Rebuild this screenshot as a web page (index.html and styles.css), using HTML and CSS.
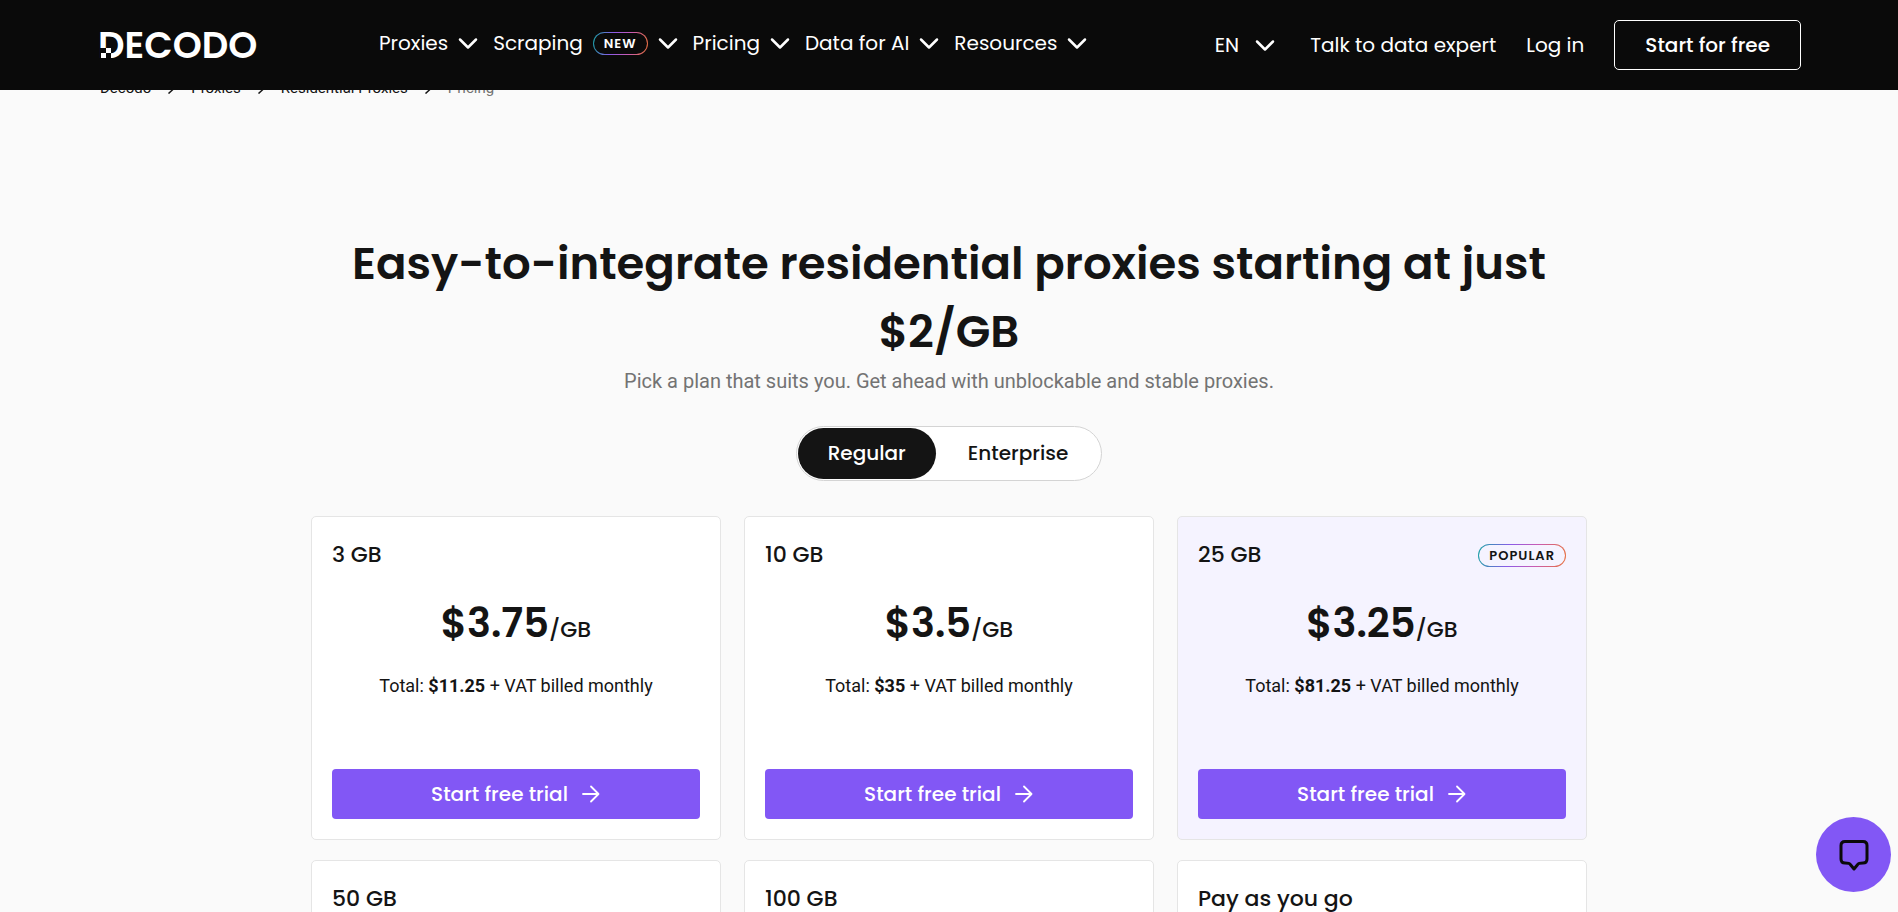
FILE: index.html
```html
<!DOCTYPE html>
<html lang="en">
<head>
<meta charset="utf-8">
<meta name="viewport" content="width=device-width, initial-scale=1">
<title>Decodo</title>
<link rel="stylesheet" href="styles.css">
</head>
<body>
<svg class="symbols" aria-hidden="true">
  <symbol id="chevron" viewBox="0 0 24 24"><path d="M4 8.500l8 8 8-8" fill="none" stroke="currentColor" stroke-width="2.500" stroke-linecap="round" stroke-linejoin="round"/></symbol>
  <symbol id="arrow" viewBox="0 0 20 20"><path d="M2 10h15M10 2.500l7.500 7.500-7.500 7.500" fill="none" stroke="currentColor" stroke-width="1.800" stroke-linecap="round" stroke-linejoin="round"/></symbol>
  <symbol id="next" viewBox="0 0 12 12"><path d="M3.500 0.500l6 5.500-6 5.500" fill="none" stroke="currentColor" stroke-width="1.500"/></symbol>
</svg>

<header class="header">
  <a class="logo" href="#" aria-label="Decodo">
    <svg class="logo-art" viewBox="0 0 160 30">
      <text class="logo-text" x="-2" y="28">DECODO</text>
      <path fill="#0a0a0a" d="M0 18h11v11H0z"/>
      <path fill="#fff" d="M6 18h5v5H6zM1 23h5v5H1z"/>
    </svg>
  </a>
  <nav class="nav">
    <button class="nav-item" type="button">Proxies <svg class="chevron"><use href="#chevron"/></svg></button>
    <button class="nav-item" type="button">Scraping <span class="badge badge-dark">NEW</span> <svg class="chevron"><use href="#chevron"/></svg></button>
    <button class="nav-item" type="button">Pricing <svg class="chevron"><use href="#chevron"/></svg></button>
    <button class="nav-item" type="button">Data for AI <svg class="chevron"><use href="#chevron"/></svg></button>
    <button class="nav-item" type="button">Resources <svg class="chevron"><use href="#chevron"/></svg></button>
  </nav>
  <div class="account">
    <button class="language" type="button">EN <svg class="chevron"><use href="#chevron"/></svg></button>
    <a class="account-link" href="#">Talk to data expert</a>
    <a class="account-link" href="#">Log in</a>
    <a class="start" href="#">Start for free</a>
  </div>
</header>

<main class="page">
  <nav class="crumbs" aria-label="Breadcrumb">
    <a href="#">Decodo</a><svg class="next"><use href="#next"/></svg>
    <a href="#">Proxies</a><svg class="next"><use href="#next"/></svg>
    <a href="#">Residential Proxies</a><svg class="next"><use href="#next"/></svg>
    <span class="crumb-current">Pricing</span>
  </nav>
  <section class="plans">
    <h1 class="title">Easy-to-integrate residential proxies starting at just $2/GB</h1>
    <p class="subtitle">Pick a plan that suits you. Get ahead with unblockable and stable proxies.</p>
    <div class="toggle">
      <button class="toggle-option toggle-active" type="button" aria-pressed="true">Regular</button>
      <button class="toggle-option" type="button" aria-pressed="false">Enterprise</button>
    </div>
    <div class="cards">
      <article class="card">
        <div class="card-head"><h2 class="card-title">3 GB</h2></div>
        <p class="price"><strong class="amount">$3.75</strong>/GB</p>
        <p class="total">Total: <b>$11.25</b> + VAT billed monthly</p>
        <a class="trial" href="#">Start free trial <svg class="arrow"><use href="#arrow"/></svg></a>
      </article>
      <article class="card">
        <div class="card-head"><h2 class="card-title">10 GB</h2></div>
        <p class="price"><strong class="amount">$3.5</strong>/GB</p>
        <p class="total">Total: <b>$35</b> + VAT billed monthly</p>
        <a class="trial" href="#">Start free trial <svg class="arrow"><use href="#arrow"/></svg></a>
      </article>
      <article class="card card-popular">
        <div class="card-head"><h2 class="card-title">25 GB</h2><span class="badge badge-light">POPULAR</span></div>
        <p class="price"><strong class="amount">$3.25</strong>/GB</p>
        <p class="total">Total: <b>$81.25</b> + VAT billed monthly</p>
        <a class="trial" href="#">Start free trial <svg class="arrow"><use href="#arrow"/></svg></a>
      </article>
      <article class="card"><div class="card-head"><h2 class="card-title">50 GB</h2></div></article>
      <article class="card"><div class="card-head"><h2 class="card-title">100 GB</h2></div></article>
      <article class="card"><div class="card-head"><h2 class="card-title">Pay as you go</h2></div></article>
    </div>
  </section>
</main>

<button class="chat" type="button" aria-label="Open chat">
  <svg class="chat-icon" viewBox="0 0 32 32"><path d="M7 2.500h18q4 0 4 4v13.500q0 4-4 4c-4 0-4.500.300-5.500 1.700L16 30l-3.500-4.300C11.500 24.300 11 24 7 24q-4 0-4-4V6.500q0-4 4-4z" fill="none" stroke="currentColor" stroke-width="3" stroke-linejoin="round"/></svg>
</button>
</body>
</html>
```

FILE: styles.css
```css
* { box-sizing: border-box; }

body {
  height: 100vh;
  margin: 0;
  overflow: hidden;
  background: #fafafa;
  color: #141414;
  font-family: Poppins, Inter, sans-serif;
  font-size: 20px;
}

h1, h2, p { margin: 0; }
a { color: inherit; text-decoration: none; }
button { padding: 0; border: 0; background: none; color: inherit; font: inherit; cursor: pointer; }

.symbols { position: absolute; width: 0; height: 0; }

.header {
  position: fixed;
  inset: 0 0 auto;
  z-index: 2;
  display: flex;
  align-items: center;
  height: 90px;
  padding: 0 97px 0 100px;
  background: #0a0a0a;
  color: #fff;
  white-space: nowrap;
}

.logo { display: flex; margin-right: 119px; }
.logo-art { width: 160px; height: 30px; overflow: visible; }
.logo-text { fill: #fff; font-size: 37px; font-weight: 600; }

.nav { display: flex; gap: 13px; padding-bottom: 4px; }
.nav-item { display: flex; align-items: center; gap: 8px; }
.chevron { width: 24px; height: 24px; }

.badge {
  border: 1px solid transparent;
  border-radius: 12px;
  padding: 0 10px;
  font-size: 13px;
  font-weight: 600;
  line-height: 21px;
  letter-spacing: 1px;
}
.badge-dark {
  margin-left: 2px;
  background: linear-gradient(#0a0a0a, #0a0a0a) padding-box, linear-gradient(100deg, #16a3a3, #8a5be8 35%, #c85bb5 65%, #e8703a) border-box;
}
.badge-light {
  background: linear-gradient(#f5f3ff, #f5f3ff) padding-box, linear-gradient(100deg, #16a3a3, #8a5be8 35%, #c85bb5 65%, #e8703a) border-box;
}

.account { display: flex; align-items: center; gap: 30px; margin-left: auto; }
.language { display: flex; align-items: center; gap: 14px; margin-right: 3px; }
.start {
  padding: 0 30px;
  border: 1px solid #fff;
  border-radius: 5px;
  font-weight: 500;
  line-height: 48px;
}

.page { padding: 76px 100px 0; }

.crumbs {
  display: flex;
  align-items: center;
  font-family: Roboto, sans-serif;
  font-size: 15px;
  line-height: 24px;
}
.next { width: 12px; height: 12px; margin: 0 14px; }
.crumb-current { color: #737373; }

.plans { max-width: 1276px; margin: 130px auto 0; }
.title { font-size: 45px; font-weight: 600; line-height: 68px; text-align: center; }
.subtitle {
  color: #737373;
  font-family: Roboto, sans-serif;
  font-size: 20px;
  line-height: 30px;
  text-align: center;
}

.toggle {
  display: flex;
  width: fit-content;
  margin: 30px auto 35px;
  padding: 1px;
  border: 1px solid #d4d4d4;
  border-radius: 28px;
  background: #fff;
}
.toggle-option { padding: 0 32px; border-radius: 26px; font-weight: 500; line-height: 51px; }
.toggle-active { padding: 0 30px; background: #141414; color: #fff; }

.cards { display: grid; grid-template-columns: repeat(3, 1fr); gap: 20px 23px; }
.card {
  display: flex;
  flex-direction: column;
  min-height: 324px;
  padding: 20px;
  border: 1px solid #e5e5e5;
  border-radius: 5px;
  background: #fff;
}
.card-popular { background: #f5f3ff; }
.card-head { display: flex; align-items: center; justify-content: space-between; }
.card-title { font-size: 22px; font-weight: 500; line-height: 36px; }
.price { margin-top: 20px; font-size: 22px; font-weight: 500; line-height: 60px; text-align: center; }
.amount { font-size: 40px; font-weight: 600; }
.total {
  margin-top: 12px;
  font-family: Roboto, sans-serif;
  font-size: 18px;
  line-height: 28px;
  text-align: center;
}
.trial {
  display: flex;
  align-items: center;
  justify-content: center;
  gap: 13px;
  margin-top: auto;
  border-radius: 4px;
  background: #8257f5;
  color: #fff;
  font-weight: 500;
  line-height: 50px;
}
.arrow { width: 20px; height: 20px; }

.chat {
  position: fixed;
  right: 7px;
  bottom: 20px;
  display: grid;
  place-items: center;
  width: 75px;
  height: 75px;
  border-radius: 50%;
  background: #8257f5;
  color: #0a0a0a;
}
.chat-icon { width: 32px; height: 32px; }
```
